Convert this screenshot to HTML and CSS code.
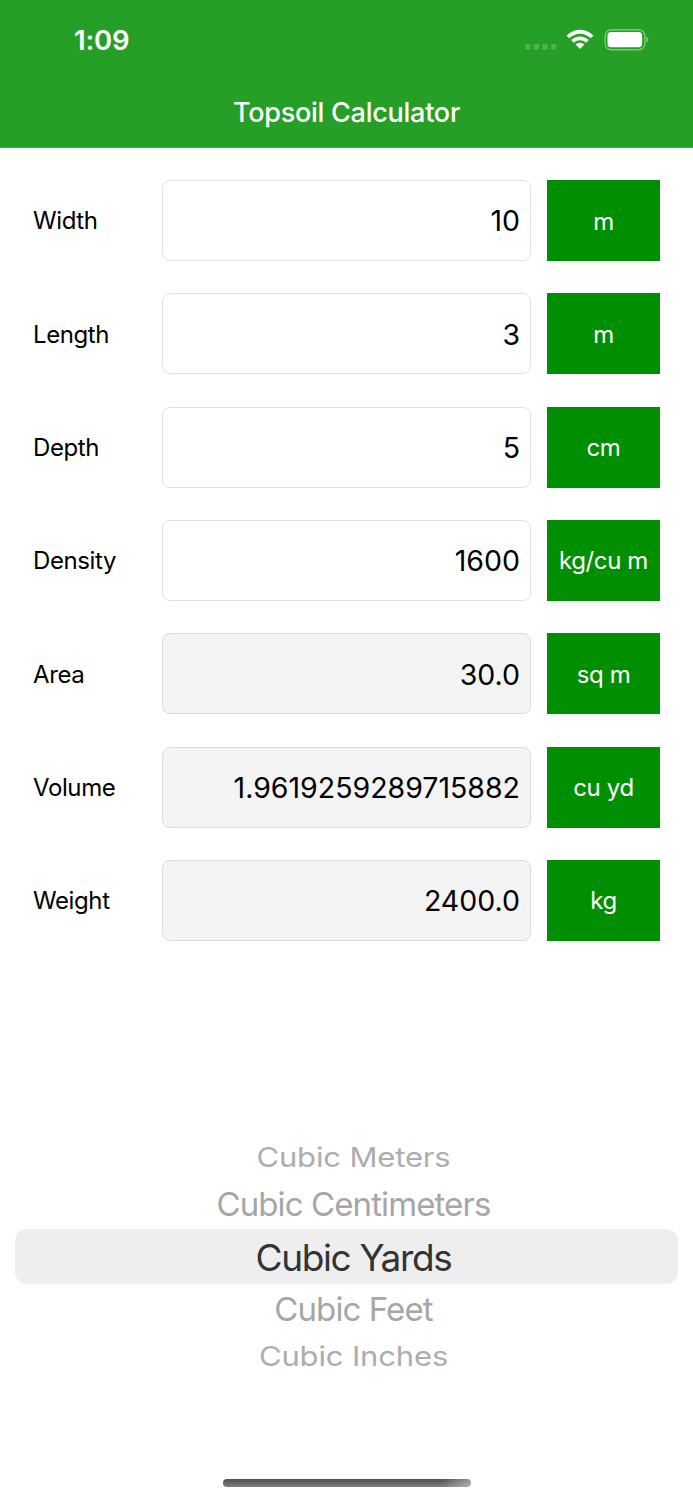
FILE: index.html
```
<!DOCTYPE html>
<html lang="en">
<head>
    <meta charset="UTF-8">
    <meta name="viewport" content="width=device-width, initial-scale=1.0">
    <title>Topsoil Calculator</title>
    <link rel="stylesheet" href="styles.css">
</head>
<body>
    <header class="header">
        <div class="status-bar">
            <span class="time">1:09</span>
            <div class="status-icons">
                <svg class="signal" width="32" height="6" viewBox="0 0 32 6">
                    <rect x="0" y="0" width="5.6" height="5.6" rx="1.5"/>
                    <rect x="8.7" y="0" width="5.6" height="5.6" rx="1.5"/>
                    <rect x="17.2" y="0" width="5.6" height="5.6" rx="1.5"/>
                    <rect x="25.9" y="0" width="5.6" height="5.6" rx="1.5"/>
                </svg>
                <svg class="wifi" width="28" height="21" viewBox="0 0 28 21">
                    <path d="M.6 6.5C8.2-1.2 19.8-1.2 27.4 6.5L24.7 9.2C18.6 3.2 9.4 3.2 3.3 9.2Z"/>
                    <path d="M5.1 11C10.2 6.2 17.8 6.2 22.9 11L20.2 13.7C16.6 10.4 11.4 10.4 7.8 13.7Z"/>
                    <path d="M9.7 15.5C12.1 13.3 15.9 13.3 18.3 15.5L14 20Z"/>
                </svg>
                <svg class="battery" width="45" height="22" viewBox="0 0 45 22">
                    <rect class="battery-case" x="1.2" y=".8" width="39.6" height="19.9" rx="5.8"/>
                    <rect x="3.5" y="3.1" width="34.6" height="15.2" rx="3.6"/>
                    <path class="battery-cap" d="M42.3 7.4C45 8.5 45 12.7 42.3 13.8Z"/>
                </svg>
            </div>
        </div>
        <h1 class="title">Topsoil Calculator</h1>
    </header>

    <main class="form">
        <div class="row">
            <div class="label">Width</div>
            <div class="field">10</div>
            <div class="unit">m</div>
        </div>
        <div class="row">
            <div class="label">Length</div>
            <div class="field">3</div>
            <div class="unit">m</div>
        </div>
        <div class="row">
            <div class="label">Depth</div>
            <div class="field">5</div>
            <div class="unit">cm</div>
        </div>
        <div class="row">
            <div class="label">Density</div>
            <div class="field">1600</div>
            <div class="unit">kg/cu m</div>
        </div>
        <div class="row">
            <div class="label">Area</div>
            <div class="field readonly">30.0</div>
            <div class="unit">sq m</div>
        </div>
        <div class="row">
            <div class="label">Volume</div>
            <div class="field readonly">1.9619259289715882</div>
            <div class="unit">cu yd</div>
        </div>
        <div class="row">
            <div class="label">Weight</div>
            <div class="field readonly">2400.0</div>
            <div class="unit">kg</div>
        </div>
    </main>

    <div class="picker">
        <div class="option far"><span>Cubic Meters</span></div>
        <div class="option near"><span>Cubic Centimeters</span></div>
        <div class="option selected"><span>Cubic Yards</span></div>
        <div class="option near"><span>Cubic Feet</span></div>
        <div class="option far"><span>Cubic Inches</span></div>
    </div>

    <div class="home-indicator"></div>
</body>
</html>
```
FILE: styles.css
```
* {
    box-sizing: border-box;
}
body {
    margin: 0;
    height: 1500px;
    display: flex;
    flex-direction: column;
    background-color: #fff;
    font-family: Inter, "Liberation Sans", sans-serif;
    color: #000;
}
.header {
    height: 148px;
    background-color: #269f26;
    border-bottom: 1px solid #45ad45;
    color: #fff;
}
.status-bar {
    height: 79px;
    padding: 0 44px 0 74px;
    display: flex;
    align-items: center;
    justify-content: space-between;
}
.time {
    font-size: 27.5px;
    font-weight: 600;
    letter-spacing: -0.2px;
}
.status-icons {
    display: flex;
    align-items: center;
    gap: 10px;
}
.status-icons svg {
    fill: #fff;
}
.status-icons .signal {
    margin-top: 14px;
    margin-right: -1px;
    fill: #51b251;
}
.status-icons .battery-case {
    fill: none;
    stroke: #7dc57d;
    stroke-width: 1.4;
}
.status-icons .battery-cap {
    fill: #7dc57d;
}
.title {
    margin: 0;
    line-height: 68px;
    text-align: center;
    font-size: 27px;
    font-weight: 550;
    letter-spacing: -0.25px;
}
.form {
    padding: 32px 33px 0;
    display: flex;
    flex-direction: column;
    gap: 32.33px;
}
.row {
    height: 81px;
    display: grid;
    grid-template-columns: 113px 369px 113px;
    column-gap: 16px;
    align-items: stretch;
}
.label,
.unit {
    display: flex;
    align-items: center;
    font-size: 24px;
    letter-spacing: -0.4px;
}
.label {
    padding-top: 0.5px;
}
.field {
    display: flex;
    align-items: center;
    justify-content: flex-end;
    padding: 0.5px 10px 0 0;
    border: 1px solid #e2e2e2;
    border-radius: 8px;
    font-size: 28.5px;
}
.readonly {
    background-color: #f4f4f4;
    border-color: #dcdcdc;
}
.unit {
    justify-content: center;
    padding-top: 1px;
    background-color: #008f00;
    color: #fff;
}
.picker {
    margin: 194px 15px 0;
    display: flex;
    flex-direction: column;
}
.option {
    display: flex;
    align-items: center;
    justify-content: center;
    padding-left: 14px;
    color: #a6a6a6;
}
.option span {
    white-space: nowrap;
}
.far {
    height: 44px;
    font-size: 31px;
    letter-spacing: -0.15px;
    color: #adadad;
}
/* rows turned away on the wheel look flatter */
.far span {
    transform: scaleY(0.88);
}
.near {
    height: 50px;
    padding-top: 1px;
    font-size: 33px;
    letter-spacing: -0.9px;
}
.selected {
    height: 55px;
    padding-top: 2px;
    border-radius: 12px;
    background-color: #eee;
    color: #333;
    font-size: 37px;
    letter-spacing: -1.35px;
}
.home-indicator {
    width: 248px;
    height: 8px;
    margin: auto auto 13px;
    border-radius: 4px;
    background: linear-gradient(90deg, transparent 88%, rgba(255, 255, 255, 0.4)), linear-gradient(#4d4d4d, #808080);
}
```
